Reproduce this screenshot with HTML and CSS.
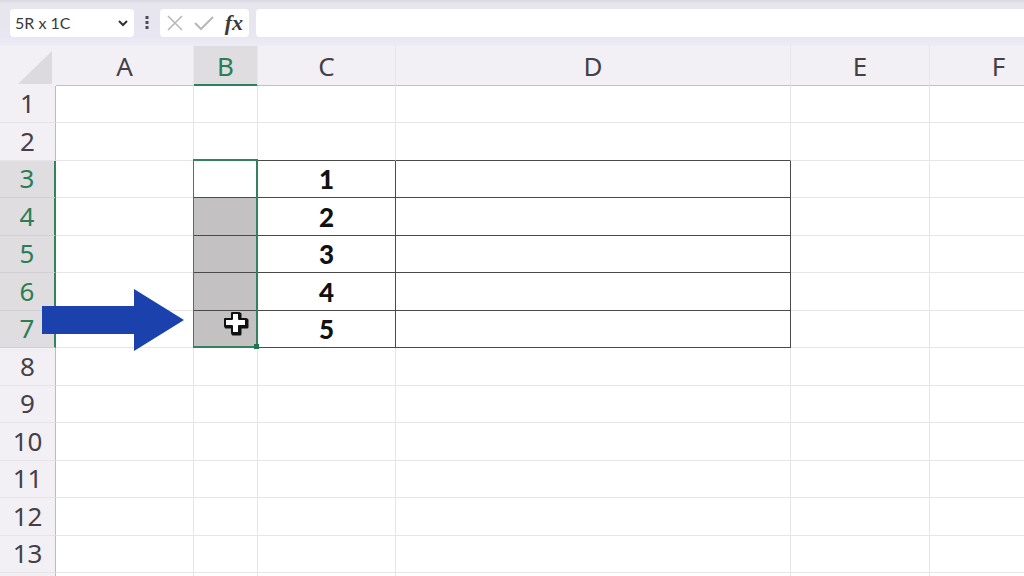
FILE: index.html
```html
<!DOCTYPE html>
<html lang="en">
<head>
<meta charset="utf-8">
<title>Spreadsheet</title>
<link rel="stylesheet" href="styles.css">
</head>
<body>
<div class="app">
  <header class="formula-bar">
    <div class="name-box">
      <input class="name-input" type="text" value="5R x 1C" aria-label="Name box">
      <button class="icon-button" type="button" aria-label="Open name list">
        <svg width="12" height="8" viewBox="0 0 12 8"><path d="M2 2l4 4 4-4" fill="none" stroke="#333" stroke-width="2"/></svg>
      </button>
    </div>
    <svg class="grip" width="4" height="14" viewBox="0 0 4 14"><g fill="#4c4a52"><rect x="0.5" y="0" width="3" height="3"/><rect x="0.5" y="5" width="3" height="3"/><rect x="0.5" y="10" width="3" height="3"/></g></svg>
    <div class="actions">
      <button class="icon-button" type="button" aria-label="Cancel">
        <svg width="16" height="16" viewBox="0 0 16 16"><path d="M1 1l14 14M15 1L1 15" stroke="#b9b7bb" stroke-width="1.6"/></svg>
      </button>
      <button class="icon-button" type="button" aria-label="Enter">
        <svg width="20" height="16" viewBox="0 0 20 16"><path d="M1 8l6 6L19 2" fill="none" stroke="#b9b7bb" stroke-width="2"/></svg>
      </button>
      <button class="icon-button fx" type="button" aria-label="Insert function">fx</button>
    </div>
    <input class="formula-input" type="text" aria-label="Formula">
  </header>
  <main class="sheet">
    <table class="grid">
      <colgroup><col class="col-head"><col class="col-a"><col class="col-b"><col class="col-c"><col class="col-d"><col class="col-e"><col class="col-f"></colgroup>
      <thead>
        <tr>
          <th class="corner"><svg width="34" height="33" viewBox="0 0 34 33"><path d="M34 0V33H0z" fill="#dcdade"/></svg></th>
          <th scope="col">A</th><th class="active" scope="col">B</th><th scope="col">C</th><th scope="col">D</th><th scope="col">E</th><th scope="col">F</th>
        </tr>
      </thead>
      <tbody>
        <tr><th scope="row">1</th><td></td><td></td><td></td><td></td><td></td><td></td></tr>
        <tr class="before-box"><th scope="row">2</th><td></td><td></td><td></td><td></td><td></td><td></td></tr>
        <tr class="boxed"><th scope="row">3</th><td></td><td class="anchor"><div class="selection"><span class="handle"></span></div></td><td>1</td><td></td><td></td><td></td></tr>
        <tr class="boxed"><th scope="row">4</th><td></td><td class="shaded"></td><td>2</td><td></td><td></td><td></td></tr>
        <tr class="boxed"><th scope="row">5</th><td></td><td class="shaded"></td><td>3</td><td></td><td></td><td></td></tr>
        <tr class="boxed"><th scope="row">6</th><td></td><td class="shaded"></td><td>4</td><td></td><td></td><td></td></tr>
        <tr class="boxed"><th class="pointed" scope="row">7<svg class="arrow" width="142" height="62" viewBox="0 0 142 62"><path d="M0 17H92V0L142 31L92 62V45H0z" fill="#1a41ac"/></svg></th><td></td><td class="shaded"><svg class="cursor" width="26" height="26" viewBox="0 0 26 26"><path d="M9 2H16V8H23V15H16V22H9V15H2V8H9z" fill="#111" stroke="#111" stroke-width="3" stroke-linejoin="round" transform="translate(1 1)"/><path d="M9 2H16V8H23V15H16V22H9V15H2V8H9z" fill="#fff" stroke="#111" stroke-width="2" stroke-linejoin="round"/></svg></td><td>5</td><td></td><td></td><td></td></tr>
        <tr><th scope="row">8</th><td></td><td></td><td></td><td></td><td></td><td></td></tr>
        <tr><th scope="row">9</th><td></td><td></td><td></td><td></td><td></td><td></td></tr>
        <tr><th scope="row">10</th><td></td><td></td><td></td><td></td><td></td><td></td></tr>
        <tr><th scope="row">11</th><td></td><td></td><td></td><td></td><td></td><td></td></tr>
        <tr><th scope="row">12</th><td></td><td></td><td></td><td></td><td></td><td></td></tr>
        <tr><th scope="row">13</th><td></td><td></td><td></td><td></td><td></td><td></td></tr>
        <tr><th></th><td></td><td></td><td></td><td></td><td></td><td></td></tr>
      </tbody>
    </table>
  </main>
</div>
</body>
</html>
```
FILE: styles.css
```css
* { box-sizing: border-box; }
body { margin: 0; background: #fff; font-family: "Noto Sans", "Open Sans", sans-serif; }
.app { height: 100vh; overflow: hidden; display: flex; flex-direction: column; }

.formula-bar {
  display: flex;
  align-items: center;
  flex: none;
  height: 46px;
  padding: 9px 0 9px 10px;
  background: linear-gradient(#d9d8e0 0, #e7e6ef 4px, #e7e6f1 36px, #ececf7 46px);
}
.name-box { display: flex; align-items: center; width: 124px; height: 28px; padding: 0 5px; background: #fff; border-radius: 4px; }
.name-input { flex: 1; min-width: 0; padding: 0; border: 0; outline: 0; background: transparent; color: #3b393d; font: 16px/24px Lato, sans-serif; }
.icon-button { display: flex; align-items: center; padding: 0; border: 0; background: transparent; }
.grip { margin: 0 11px; }
.actions { display: flex; align-items: center; justify-content: space-between; width: 89px; height: 28px; padding: 0 6px 0 7px; background: #fff; border-radius: 4px; }
.fx { color: #3b393d; font: italic bold 22px/24px "Liberation Serif", serif; }
.formula-input { flex: 1; min-width: 0; height: 28px; margin-left: 7px; border: 0; outline: 0; background: #fff; border-radius: 4px 0 0 4px; }

.sheet { flex: 1; min-height: 0; overflow: hidden; }
.grid { width: 1068px; table-layout: fixed; border-collapse: separate; border-spacing: 0; }
.col-head { width: 56px; }
.col-a, .col-c, .col-f { width: 138px; }
.col-b { width: 64px; }
.col-d { width: 395px; }
.col-e { width: 139px; }

th, td { padding: 0; border: 0 solid #e6e5e7; border-width: 0 1px 1px 0; text-align: center; }
th { background: #f3f0f5; color: #434047; font-size: 26px; font-weight: 400; line-height: 36px; }
thead th { height: 40px; border-right-color: #e9e6eb; border-bottom-color: #c3c1c5; }
thead .active { background: #dfdde0; border-bottom-color: #2f7e5d; box-shadow: inset 0 -1px #2f7e5d; color: #2b7d53; }
thead .corner { padding: 5px 3px 0 0; border-color: #f3f0f5; line-height: 0; text-align: right; vertical-align: top; }
tbody tr { height: 37px; }
tbody tr:nth-child(even) { height: 38px; }
tbody th { padding-bottom: 2px; border-right-color: #bdbbbf; border-bottom-color: #e7e4e9; line-height: 34px; }
td { background: #fff; color: #111; font: 900 26px/32px Lato, sans-serif; }

.boxed th { background: #dfdde0; border-right: 2px solid #35805d; border-bottom-color: #d1cfd3; color: #2b7d53; }
.boxed td:nth-child(n+3):nth-child(-n+5) { border-color: #4a4a4a; }
.before-box td:nth-child(n+3):nth-child(-n+5) { border-bottom-color: #4a4a4a; }
.boxed .shaded { position: relative; background: #c4c1c3; }

.anchor, .pointed { position: relative; }
.selection { position: absolute; z-index: 1; top: -2px; left: -1px; width: 65px; height: 189px; border: 2px solid #35805d; border-left-width: 1px; }
.handle { position: absolute; right: -3px; bottom: -3px; width: 5px; height: 5px; background: #23734e; }
.cursor { position: absolute; z-index: 2; top: 0; left: 29px; }
.arrow { position: absolute; z-index: 3; top: -22px; left: 42px; }
```
